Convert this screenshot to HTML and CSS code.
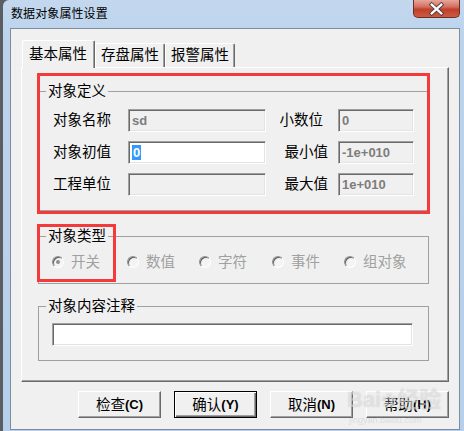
FILE: index.html
```html
<!DOCTYPE html>
<html lang="zh-CN">
<head>
    <meta charset="UTF-8">
    <title>数据对象属性设置</title>
    <link rel="stylesheet" href="styles.css">
</head>
<body>
    <div class="window">
        <div class="titlebar">
            <span class="title">数据对象属性设置</span>
            <span class="close">
                <svg width="47" height="18" viewBox="0 0 47 18">
                    <path d="M18.5 4.5 L28.5 13.5 M28.5 4.5 L18.5 13.5" stroke="#4a3a3a" stroke-width="4.2" stroke-linecap="square" fill="none"/>
                    <path d="M18.5 4.5 L28.5 13.5 M28.5 4.5 L18.5 13.5" stroke="#ffffff" stroke-width="2.4" stroke-linecap="square" fill="none"/>
                </svg>
            </span>
        </div>

        <div class="client">
            <div class="tabs">
                <div class="tab active">基本属性</div>
                <div class="tab">存盘属性</div>
                <div class="tab">报警属性</div>
            </div>

            <div class="page">
                <fieldset class="group group-def">
                    <legend>对象定义</legend>
                    <div class="def-grid">
                        <span class="lbl">对象名称</span>
                        <div class="edit disabled">sd</div>
                        <span class="lbl lbl-r lbl-dec">小数位</span>
                        <div class="edit disabled">0</div>

                        <span class="lbl">对象初值</span>
                        <div class="edit"><span class="sel">0</span></div>
                        <span class="lbl lbl-r">最小值</span>
                        <div class="edit disabled">-1e+010</div>

                        <span class="lbl">工程单位</span>
                        <div class="edit disabled"></div>
                        <span class="lbl lbl-r">最大值</span>
                        <div class="edit disabled">1e+010</div>
                    </div>
                </fieldset>

                <fieldset class="group group-type">
                    <legend>对象类型</legend>
                    <div class="radios">
                        <span class="radio checked"><i></i>开关</span>
                        <span class="radio"><i></i>数值</span>
                        <span class="radio"><i></i>字符</span>
                        <span class="radio"><i></i>事件</span>
                        <span class="radio"><i></i>组对象</span>
                    </div>
                </fieldset>

                <fieldset class="group group-note">
                    <legend>对象内容注释</legend>
                    <div class="edit wide"></div>
                </fieldset>

                <div class="mark mark-def"></div>
                <div class="mark mark-type"></div>
            </div>

            <div class="buttons">
                <span class="btn">检查<b>(C)</b></span>
                <span class="btn default">确认<b>(Y)</b></span>
                <span class="btn">取消<b>(N)</b></span>
                <span class="btn">帮助<b>(H)</b></span>
                <div class="watermark">Bai<span class="paw">&#10047;</span>经验<small>jingyan.baidu.com</small></div>
            </div>
        </div>
    </div>
</body>
</html>
```

FILE: styles.css
```css
html, body {
    margin: 0;
    padding: 0;
    background-color: #5a5e63;
}

body {
    font-family: "Liberation Sans", "Noto Sans CJK SC", sans-serif;
    font-size: 14.5px;
    color: #000;
    width: 464px;
    height: 431px;
    overflow: hidden;
}

.window {
    margin-left: 3px;
    width: 461px;
    height: 431px;
    background: linear-gradient(to bottom, #c3d8ee 0, #bcd3ec 40px, #b6cfea 100%);
    border-top-left-radius: 6px;
    box-sizing: border-box;
}

.titlebar {
    height: 28px;
    display: flex;
    justify-content: space-between;
    align-items: flex-start;
    padding: 0 4px 0 8px;
}

.title {
    font-size: 12px;
    line-height: 14px;
    margin-top: 7px;
    letter-spacing: 0.1px;
}

.close {
    width: 47px;
    height: 18px;
    background: linear-gradient(to bottom, #e6a79b 0, #d2705f 40%, #c0402c 55%, #cd5a43 100%);
    border: 1px solid #6d2d25;
    border-top: none;
    border-radius: 0 0 5px 5px;
    box-sizing: border-box;
    display: flex;
}

.client {
    margin-left: 7px;
    width: 450px;
    height: 402px;
    box-sizing: border-box;
    border: 1px solid #7e8d9c;
    background-color: #f0f0f0;
    padding: 11px 10px 0 10px;
}

/* tabs */
.tabs {
    display: flex;
    align-items: flex-end;
    height: 27px;
    padding-left: 1px;
}

.tab {
    height: 24px;
    padding: 0 5px 0 5px;
    box-sizing: border-box;
    border: 1px solid #fff;
    border-bottom: none;
    border-right: 1px solid #696969;
    box-shadow: inset -1px 0 0 #a0a0a0;
    border-radius: 2px 2px 0 0;
    line-height: 23px;
    background-color: #f0f0f0;
}

.tab.active {
    height: 28px;
    margin-bottom: -1px;
    padding: 0 7px 0 6px;
    line-height: 26px;
    position: relative;
    z-index: 1;
}

.page {
    position: relative;
    height: 315px;
    box-sizing: border-box;
    border-top: 1px solid #fff;
    border-left: 1px solid #fff;
    border-right: 1px solid #696969;
    border-bottom: 1px solid #696969;
    box-shadow: inset -1px -1px 0 #a0a0a0;
    padding: 15px 0 0 16px;
}

/* group boxes */
.group {
    width: 391px;
    box-sizing: border-box;
    margin: 0;
    border: 1px solid #a0a0a0;
    padding: 0 0 0 13px;
}

.group legend {
    margin-left: -6px;
    padding: 0 2px;
    line-height: 16px;
}

.group-def {
    padding-top: 10px;
    padding-bottom: 14px;
}

.group-type {
    margin-top: 17px;
    padding-top: 10px;
    padding-bottom: 13px;
}

.group-note {
    margin-top: 14px;
    padding-top: 9px;
    padding-bottom: 14px;
}

.def-grid {
    display: grid;
    grid-template-columns: 75px 138px 72px 76px;
    grid-auto-rows: 23px;
    row-gap: 9px;
    padding-left: 1px;
}

.lbl {
    line-height: 23px;
}

.lbl-r {
    text-align: right;
    padding-right: 10px;
}

.lbl-dec {
    padding-right: 15px;
}

.edit {
    height: 23px;
    box-sizing: border-box;
    background-color: #fff;
    border: 1px solid;
    border-color: #a0a0a0 #fff #fff #a0a0a0;
    box-shadow: inset 1px 1px 0 #696969, inset -1px -1px 0 #e3e3e3;
    padding: 3px 0 0 3px;
    font-size: 13px;
    font-weight: bold;
    line-height: 15px;
    color: #7d7d7d;
}

.edit.disabled {
    background-color: #f0f0f0;
}

.edit.wide {
    width: 361px;
}

.sel {
    display: inline-block;
    background-color: #3399ff;
    color: #fff;
    padding: 0 1px;
}

/* radio buttons */
.radios {
    display: grid;
    grid-template-columns: 75px 72px 73px 72px auto;
    height: 16px;
}

.radio {
    display: flex;
    align-items: center;
    gap: 7px;
    color: #a0a0a0;
    line-height: 16px;
}

.radio i {
    width: 12px;
    height: 12px;
    box-sizing: border-box;
    border-radius: 50%;
    border: 1px solid;
    border-color: #8f8f8f #fff #fff #8f8f8f;
    box-shadow: inset 1px 1px 0 #5c5c5c;
    background-color: #f4f4f4;
    display: flex;
    align-items: center;
    justify-content: center;
}

.radio.checked i::after {
    content: "";
    width: 4px;
    height: 4px;
    border-radius: 50%;
    background-color: #8f8f8f;
}

/* red annotation boxes */
.mark {
    position: absolute;
    border: 3px solid #f43a3a;
    box-sizing: border-box;
}

.mark-def {
    left: 15px;
    top: 5px;
    width: 393px;
    height: 141px;
}

.mark-type {
    left: 15px;
    top: 156px;
    width: 79px;
    height: 58px;
}

/* buttons */
.buttons {
    position: relative;
    display: flex;
    justify-content: flex-end;
    gap: 13px;
    margin-top: 9px;
}

.btn {
    width: 83px;
    height: 27px;
    box-sizing: border-box;
    border: 1px solid;
    border-color: #fff #696969 #696969 #fff;
    box-shadow: inset -1px -1px 0 #a0a0a0;
    display: flex;
    align-items: center;
    justify-content: center;
    line-height: 16px;
}

.btn b {
    font-size: 13px;
}

.btn.default {
    border-color: #000;
    box-shadow: inset 1px 1px 0 #fff, inset -1px -1px 0 #696969, inset -2px -2px 0 #a0a0a0;
}

.watermark {
    position: absolute;
    left: 326px;
    top: -4px;
    font-size: 22px;
    font-weight: bold;
    color: rgba(255, 255, 255, 0.45);
    text-shadow: 0 0 1px rgba(120, 120, 120, 0.35);
    line-height: 26px;
    white-space: nowrap;
    pointer-events: none;
}

.watermark .paw {
    font-size: 16px;
}

.watermark small {
    display: block;
    font-size: 9px;
    font-weight: normal;
    line-height: 10px;
    margin-left: 2px;
    color: rgba(170, 170, 170, 0.3);
    text-shadow: none;
}
```
